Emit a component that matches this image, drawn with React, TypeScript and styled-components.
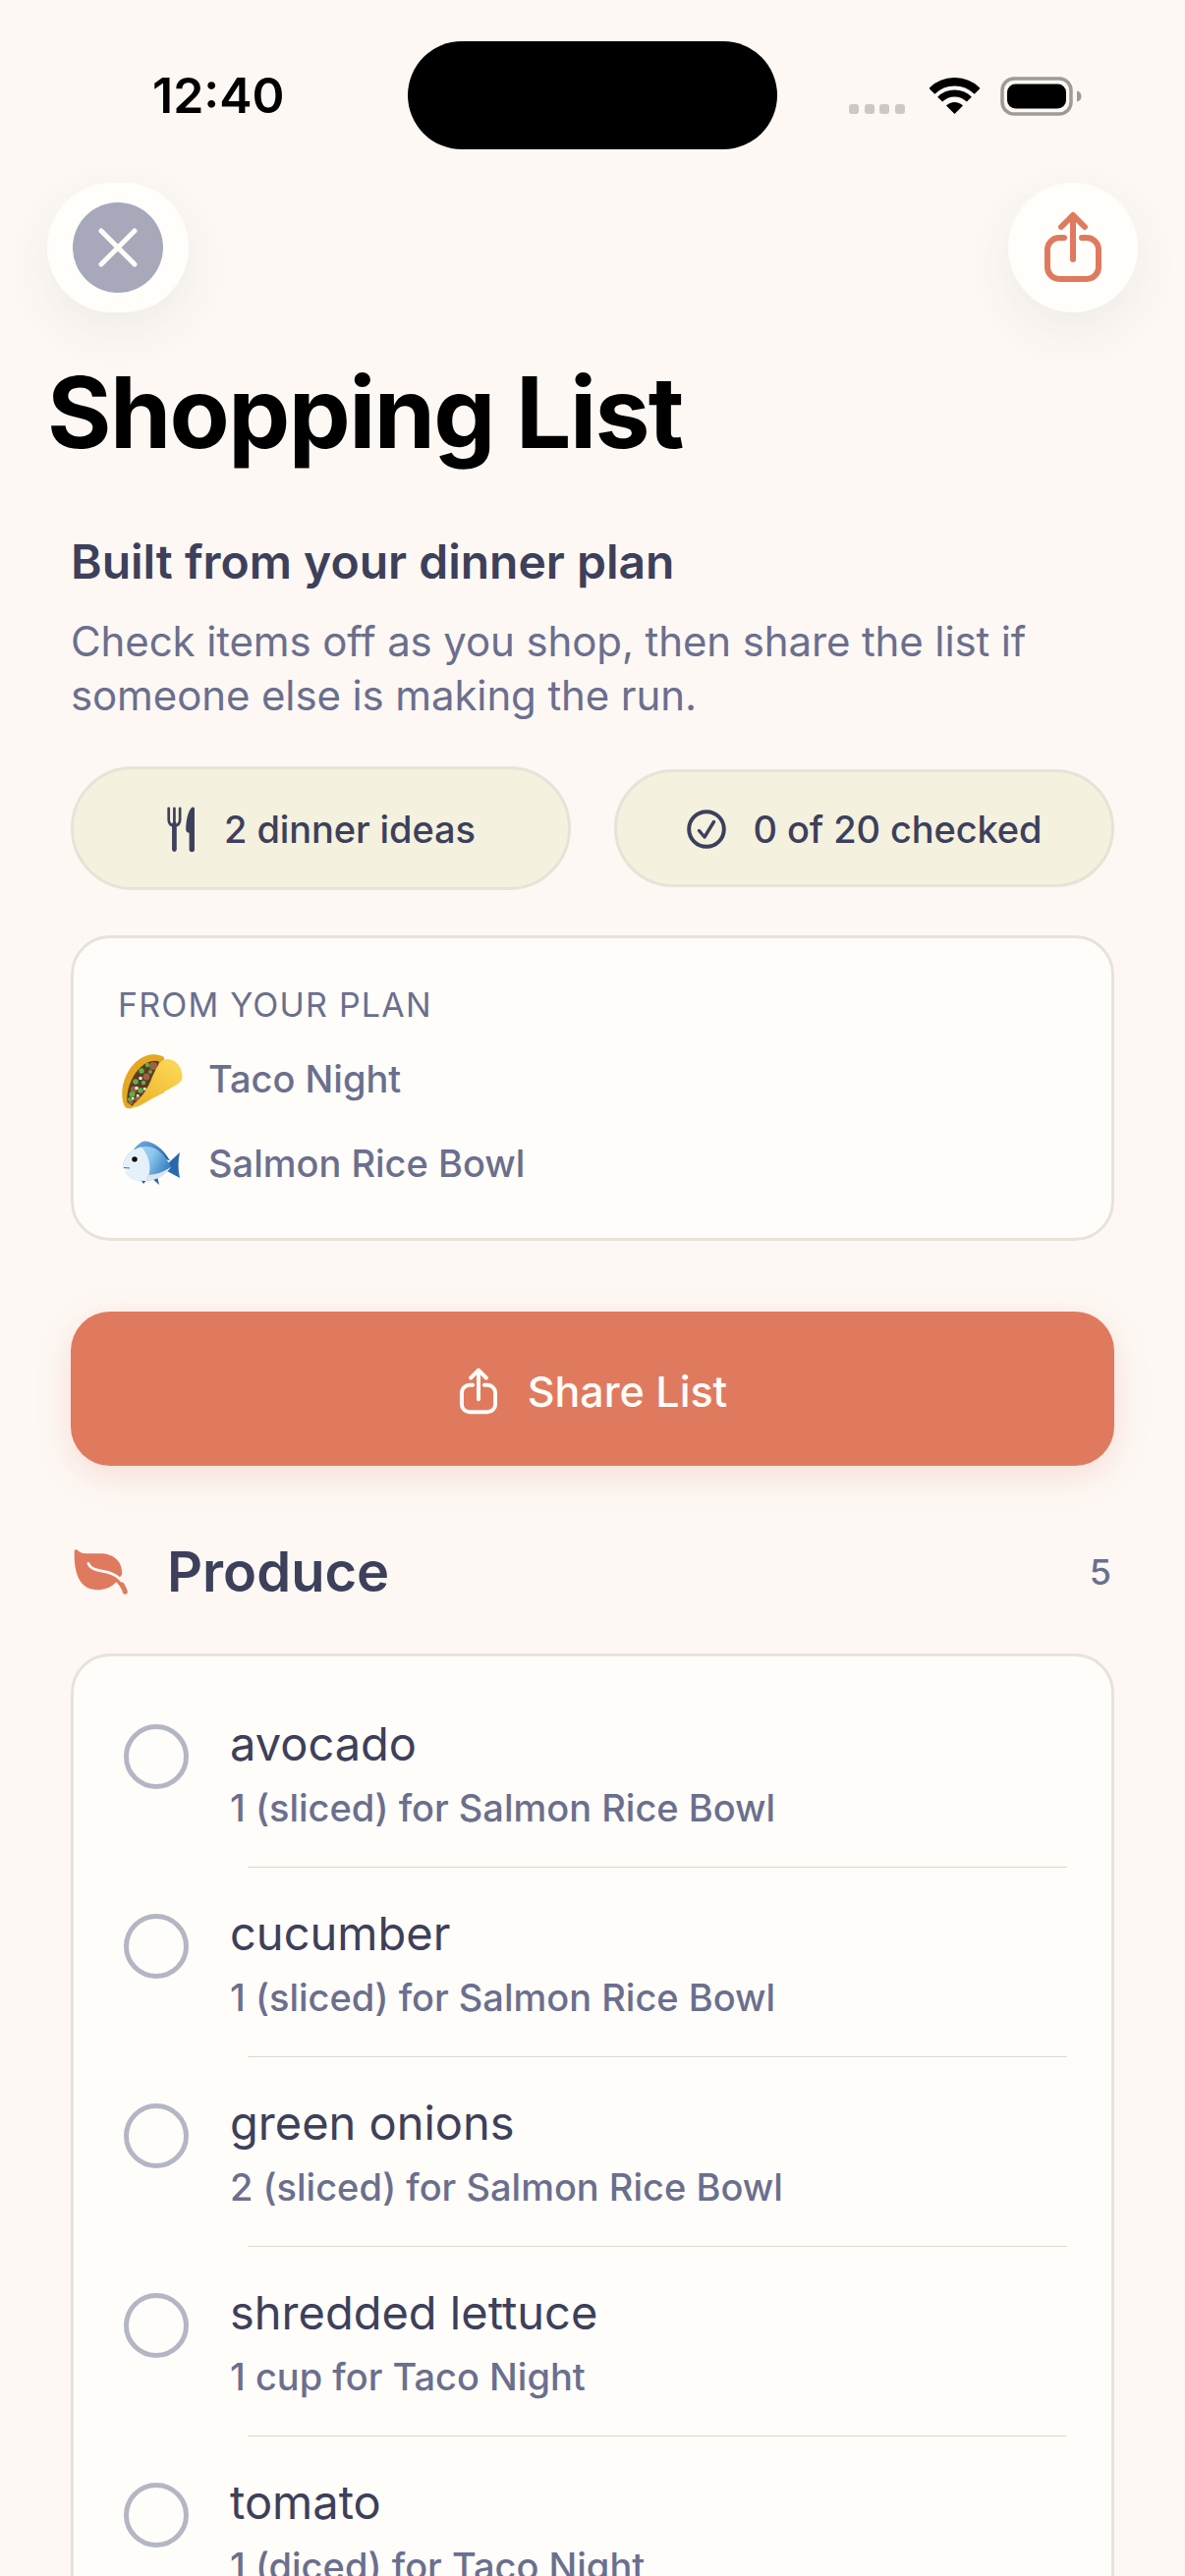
import React from "react";
import styled, { createGlobalStyle } from "styled-components";

const Global = createGlobalStyle`
  html, body { margin: 0; padding: 0; background: #fdf8f4; }
  * { box-sizing: border-box; }
  body { font-family: Inter, "Noto Sans", "Liberation Sans", sans-serif; -webkit-font-smoothing: antialiased; }
`;

const Page = styled.div`
  width: 1206px;
  height: 2622px;
  overflow: hidden;
  background: #fdf8f4;
`;

const StatusBar = styled.div`
  display: grid;
  grid-template-columns: 415px 376px 1fr;
  padding-top: 42px;
  height: 152px;
  align-items: stretch;
`;
const Time = styled.div`
  padding: 17px 0 0 155px;
  font-size: 50px;
  line-height: 76px;
  font-weight: 600;
  color: #000;
`;
const Notch = styled.div`
  background: #000;
  border-radius: 55px;
  height: 110px;
`;
const StatusIcons = styled.div`
  display: flex;
  align-items: flex-start;
  padding: 36px 0 0 73px;
`;
const SignalDots = styled.div`
  display: flex;
  gap: 5.5px;
  margin-top: 28px;
`;
const SignalDot = styled.span`
  width: 10px;
  height: 10px;
  border-radius: 3px;
  background: #cbc9c4;
`;
const Wifi = styled.svg`
  width: 51px;
  height: 37px;
  margin: 1px 0 0 25px;
`;
const Battery = styled.svg`
  width: 84px;
  height: 40px;
  margin-left: 21px;
`;

const TopBar = styled.div`
  display: flex;
  justify-content: space-between;
  padding: 34px 48px 0;
`;
const CloseButton = styled.div`
  width: 144px;
  height: 132px;
  border-radius: 66px;
  background: #fffefa;
  display: flex;
  align-items: center;
  justify-content: center;
  box-shadow: 0 18px 50px rgba(61, 64, 91, 0.07);
`;
const CloseDisc = styled.div`
  width: 92px;
  height: 92px;
  border-radius: 50%;
  background: #a7a9bb;
  display: flex;
  align-items: center;
  justify-content: center;
`;
const RoundButton = styled.div`
  width: 132px;
  height: 132px;
  border-radius: 50%;
  background: #fffefa;
  display: flex;
  align-items: center;
  justify-content: center;
  box-shadow: 0 18px 50px rgba(61, 64, 91, 0.07);
`;

const Title = styled.h1`
  margin: 52px 0 0;
  padding-left: 48px;
  font-size: 100px;
  line-height: 100px;
  font-weight: 700;
  letter-spacing: -1.6px;
  color: #000;
`;

const Content = styled.div`
  padding: 0 72px;
`;
const Lead = styled.h2`
  margin: 72px 0 0;
  font-size: 48px;
  line-height: 60px;
  font-weight: 600;
  color: #3d405b;
`;
const Body = styled.p`
  margin: 23px 0 0;
  font-size: 42px;
  line-height: 55px;
  font-weight: 400;
  letter-spacing: -0.12px;
  color: #6b6f8e;
`;
const Chips = styled.div`
  display: grid;
  grid-template-columns: 1fr 1fr;
  column-gap: 44px;
  align-items: center;
  margin-top: 45px;
`;
const Chip = styled.div`
  display: flex;
  align-items: center;
  justify-content: center;
  gap: 28px;
  padding: 37px 0 35px;
  background: #f4f1de;
  border: 3px solid #e8e2d8;
  border-radius: 64px;
  font-size: 38px;
  line-height: 40px;
  font-weight: 500;
  letter-spacing: -0.1px;
  color: #3d405b;
`;

const PlanCard = styled.div`
  margin-top: 46px;
  padding: 48px 45px 46px;
  background: #fffdf9;
  border: 3px solid #e8e2d8;
  border-radius: 40px;
`;
const PlanLabel = styled.div`
  font-size: 34px;
  line-height: 40px;
  font-weight: 400;
  letter-spacing: 1.2px;
  color: #6b6f8e;
  text-transform: uppercase;
`;
const PlanRows = styled.div`
  display: flex;
  flex-direction: column;
  gap: 26px;
  margin-top: 25px;
`;
const PlanRow = styled.div`
  display: flex;
  align-items: center;
  height: 60px;
  font-size: 38px;
  font-weight: 500;
  color: #6b6f8e;
`;
const EmojiSlot = styled.div`
  width: 92px;
  padding-left: 3px;
  display: flex;
  align-items: center;
`;

const ShareButton = styled.div`
  margin-top: 72px;
  height: 157px;
  padding-top: 5px;
  border-radius: 40px;
  background: #e07a5f;
  display: flex;
  align-items: center;
  justify-content: center;
  gap: 29px;
  color: #fffdf9;
  font-size: 43px;
  font-weight: 500;
  box-shadow: 0 10px 36px rgba(224, 122, 95, 0.2);
`;

const SectionHead = styled.div`
  display: flex;
  align-items: center;
  margin-top: 73px;
  height: 70px;
  padding: 0 3px 0 3px;
`;
const SectionTitle = styled.div`
  margin-left: 39px;
  flex: 1;
  font-size: 56px;
  line-height: 70px;
  font-weight: 600;
  color: #3d405b;
`;
const SectionCount = styled.div`
  font-size: 36px;
  font-weight: 500;
  color: #6b6f8e;
`;

const ListCard = styled.div`
  margin-top: 48px;
  padding-top: 22px;
  background: #fffdf9;
  border: 3px solid #e8e2d8;
  border-radius: 40px;
`;
const ItemRow = styled.div`
  display: flex;
  align-items: flex-start;
  gap: 42px;
  padding: 37px 40px 35px 51px;
`;
const Radio = styled.div`
  flex: none;
  width: 66px;
  height: 66px;
  margin-top: 10px;
  border: 5px solid #b5b6c4;
  border-radius: 50%;
`;
const ItemName = styled.div`
  font-size: 47px;
  line-height: 60px;
  font-weight: 400;
  color: #3d405b;
`;
const ItemDetail = styled.div`
  margin-top: 11px;
  margin-bottom: 1px;
  font-size: 38px;
  line-height: 48px;
  font-weight: 500;
  color: #6b6f8e;
`;
const Divider = styled.div`
  height: 1px;
  margin: 0 45px 0 177px;
  background: #dcd8d2;
`;

const ShareIcon = ({ size, color }: { size: number; color: string }) => (
  <svg width={size} height={(size * 74) / 64} viewBox="0 0 64 74" fill="none" stroke={color} strokeWidth={6} strokeLinecap="round" strokeLinejoin="round">
    <path d="M20 16 32 4l12 12" />
    <path d="M32 5v44" />
    <path d="M23 27h-5a12 12 0 0 0-12 12v18a12 12 0 0 0 12 12h28a12 12 0 0 0 12-12V39a12 12 0 0 0-12-12h-5" />
  </svg>
);

const ForkKnife = () => (
  <svg width={31} height={48} viewBox="30 28 92 142" fill="none">
    <path d="M38 36v34q0 18 17 18t17-18V36M55 36v50" stroke="#3d405b" strokeWidth={8} strokeLinecap="round" />
    <path d="M55 84v76" stroke="#3d405b" strokeWidth={14} strokeLinecap="round" />
    <path d="M116 37c0-5-5-7-9-3C96 45 90 75 90 100c0 6 4 10 10 10v50a8 8 0 0 0 16 0Z" fill="#3d405b" />
  </svg>
);

const CheckCircle = () => (
  <svg width={40} height={42} viewBox="0 0 40 42" fill="none" stroke="#3d405b" strokeLinecap="round" strokeLinejoin="round">
    <circle cx={20} cy={21} r={17.8} strokeWidth={4} />
    <path d="M12.5 22.5 18 29 27.5 13.5" strokeWidth={3.4} />
  </svg>
);

const Taco = () => (
  <svg width={64} height={57} viewBox="0 0 64 57" style={{ marginTop: 5 }}>
    <defs>
      <linearGradient id="shellF" x1="0.8" y1="0.1" x2="0.2" y2="0.9">
        <stop offset="0" stopColor="#fbd655" />
        <stop offset="1" stopColor="#eeb62e" />
      </linearGradient>
    </defs>
    <path d="M3 52C-2 38 4 16 19 6 27 0 37 0 44 4L44 40 11 56C7 57 4 56 3 52Z" fill="#e4a824" />
    <path d="M6.5 50C5 37 12 18 26 10 31 7.500 36 7 39 8.500L30 42 12 54Z" fill="#5d3a22" />
    <g fill="#9a6240">
      <circle cx="13" cy="37" r="3.200" />
      <circle cx="33" cy="13" r="4" />
      <circle cx="18" cy="47" r="3.600" />
      <circle cx="26" cy="24" r="3.400" />
      <circle cx="10" cy="50" r="2.400" />
    </g>
    <g fill="#5fb04a">
      <circle cx="11.500" cy="42" r="3" />
      <circle cx="9" cy="47" r="2.100" />
      <circle cx="15" cy="29" r="2.800" />
      <circle cx="21" cy="18" r="2.700" />
      <circle cx="27" cy="12" r="2.200" />
      <circle cx="20" cy="38" r="2.800" />
      <circle cx="23" cy="30" r="2.200" />
      <circle cx="15" cy="52" r="2" />
      <circle cx="30" cy="19" r="1.900" />
    </g>
    <g fill="#f6f6f0">
      <rect x="14.500" y="34" width="3" height="3" />
      <rect x="18.500" y="24" width="3" height="3" />
      <rect x="11" y="45" width="2.400" height="2.400" />
      <rect x="23" y="35" width="2.600" height="2.600" />
      <rect x="16" y="42" width="2.400" height="2.400" />
    </g>
    <path d="M46 6C55 5 63 14 62.5 24c0 3-2 6-5.500 8L20 53c-4 2-7 2.500-8.500.5C19 48 26 38 30 29 35 17 39 7 46 6Z" fill="url(#shellF)" />
  </svg>
);

const Fish = () => (
  <svg width={60} height={46} viewBox="0 0 60 46" style={{ marginLeft: 1 }}>
    <defs>
      <linearGradient id="fishBody" x1="0" y1="0" x2="1" y2="0.4">
        <stop offset="0" stopColor="#bfe0f6" />
        <stop offset="0.6" stopColor="#8cc8ee" />
        <stop offset="1" stopColor="#3f86c6" />
      </linearGradient>
      <linearGradient id="fishFin" x1="0" y1="0" x2="1" y2="1">
        <stop offset="0" stopColor="#78b0e0" />
        <stop offset="1" stopColor="#1f5c9e" />
      </linearGradient>
    </defs>
    <path d="M12 9C17 3 21 0 24 .5c8 1 18 7 25 20L30 14Z" fill="url(#fishFin)" />
    <path d="M46 24 59 12c-2 9-2 17 0 26L46 31Z" fill="#2a68ac" />
    <path d="M29 37l9 8-2-9ZM18 38l4 6 5-6Z" fill="#2a68ac" />
    <path d="M1 26C2 14 14 5 27 6 37 7 45 16 50 27 44 35 34 41 23 41 12 41 6 37 4 32L7 30 2 29Z" fill="url(#fishBody)" />
    <path d="M20 6.5C12 8 3 15 1 26l1 3 5 1-3 2c2 5 8 9 19 9l2 0C31 30 29 17 20 6.5Z" fill="#e4f1fb" />
    <path d="M25 41c8 0 19-5 25-14-8 5-16 8-25 8Z" fill="#dde4ec" />
    <circle cx="13" cy="19" r="3.800" fill="#f6fbff" />
    <circle cx="13" cy="19" r="2.800" fill="#111" />
    <path d="M2 27.5 8 28" stroke="#55708c" strokeWidth="1" fill="none" />
  </svg>
);

const Leaf = () => (
  <svg width={56} height={48} viewBox="48 82 165 141" fill="none">
    <path d="M50 90C53 82 60 86 64 91 74 100 100 97 125 97 165 96 195 118 193 160L178 178C165 200 135 207 115 206 70 204 48 165 50 90Z" fill="#e07a5f" />
    <path d="M175 172C190 185 198 197 202 212" stroke="#e07a5f" strokeWidth={15} strokeLinecap="round" />
    <path d="M92 127C100 150 135 148 155 155 170 160 182 166 192 180" stroke="#fdf8f4" strokeWidth={8} strokeLinecap="round" />
  </svg>
);

const items = [
  ["avocado", "1 (sliced) for Salmon Rice Bowl"],
  ["cucumber", "1 (sliced) for Salmon Rice Bowl"],
  ["green onions", "2 (sliced) for Salmon Rice Bowl"],
  ["shredded lettuce", "1 cup for Taco Night"],
  ["tomato", "1 (diced) for Taco Night"],
];

export default function App() {
  return (
    <Page>
      <Global />
      <StatusBar>
        <Time>12:40</Time>
        <Notch />
        <StatusIcons>
          <SignalDots>
            <SignalDot />
            <SignalDot />
            <SignalDot />
            <SignalDot />
          </SignalDots>
          <Wifi viewBox="0 0 51 37" fill="none">
            <path d="M2.34 13.84A32.75 32.75 0 0 1 48.66 13.84" stroke="#000" strokeWidth={8.5} />
            <path d="M10.65 22.15A21 21 0 0 1 40.35 22.15" stroke="#000" strokeWidth={7} />
            <path d="M25.5 37 17 28.5A12 12 0 0 1 34 28.5Z" fill="#000" />
          </Wifi>
          <Battery viewBox="0 0 84 40" fill="none">
            <rect x="2" y="2" width="70" height="36" rx="12" stroke="#9f9a95" strokeWidth={3.5} />
            <rect x="7" y="7.5" width="60" height="25" rx="8.5" fill="#000" />
            <path d="M78 14.5c3 .8 4.5 2.8 4.5 5.5s-1.5 4.7-4.5 5.5Z" fill="#9f9a95" />
          </Battery>
        </StatusIcons>
      </StatusBar>

      <TopBar>
        <CloseButton>
          <CloseDisc>
            <svg width={40} height={40} viewBox="0 0 40 40" stroke="#fffdf9" strokeWidth={5} strokeLinecap="round">
              <path d="M3 3 37 37M37 3 3 37" />
            </svg>
          </CloseDisc>
        </CloseButton>
        <RoundButton>
          <ShareIcon size={64} color="#e07a5f" />
        </RoundButton>
      </TopBar>

      <Title>Shopping List</Title>

      <Content>
        <Lead>Built from your dinner plan</Lead>
        <Body>
          Check items off as you shop, then share the list if
          <br />
          someone else is making the run.
        </Body>

        <Chips>
          <Chip>
            <ForkKnife />
            2 dinner ideas
          </Chip>
          <Chip>
            <CheckCircle />
            0 of 20 checked
          </Chip>
        </Chips>

        <PlanCard>
          <PlanLabel>From your plan</PlanLabel>
          <PlanRows>
            <PlanRow>
              <EmojiSlot>
                <Taco />
              </EmojiSlot>
              Taco Night
            </PlanRow>
            <PlanRow>
              <EmojiSlot>
                <Fish />
              </EmojiSlot>
              Salmon Rice Bowl
            </PlanRow>
          </PlanRows>
        </PlanCard>

        <ShareButton>
          <ShareIcon size={42} color="#fffdf9" />
          Share List
        </ShareButton>

        <SectionHead>
          <Leaf />
          <SectionTitle>Produce</SectionTitle>
          <SectionCount>5</SectionCount>
        </SectionHead>

        <ListCard>
          {items.map(([name, detail], i) => (
            <React.Fragment key={name}>
              {i > 0 && <Divider />}
              <ItemRow>
                <Radio />
                <div>
                  <ItemName>{name}</ItemName>
                  <ItemDetail>{detail}</ItemDetail>
                </div>
              </ItemRow>
            </React.Fragment>
          ))}
        </ListCard>
      </Content>
    </Page>
  );
}
